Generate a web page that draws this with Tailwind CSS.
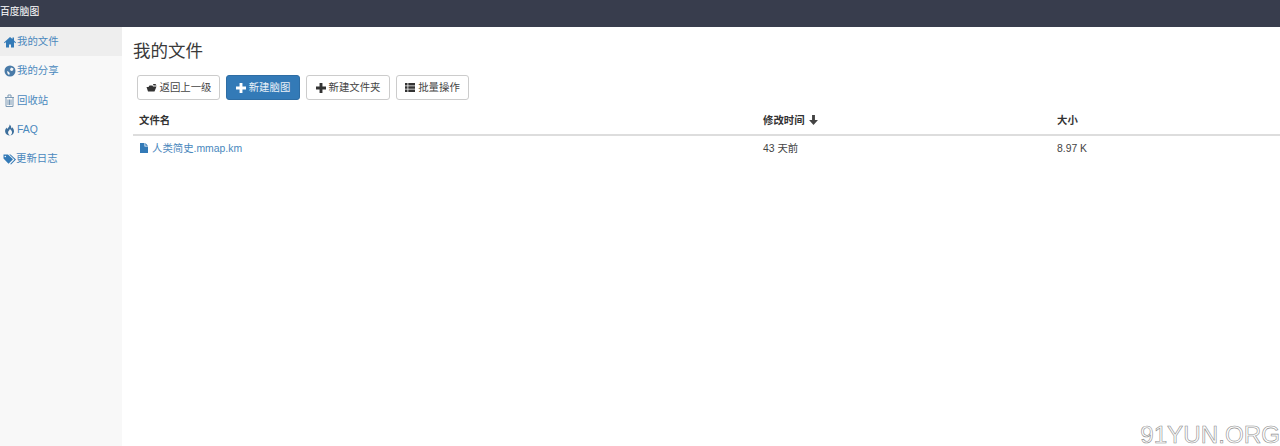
<!DOCTYPE html>
<html lang="zh">
<head>
<meta charset="utf-8">
<script src="https://cdn.jsdelivr.net/npm/@tailwindcss/browser@4"></script>
</head>
<body class="relative h-[446px] w-[1280px] overflow-hidden bg-white font-['Liberation_Sans','Noto_Sans_CJK_SC',sans-serif] text-[10.4px] text-[#444]">
<header class="flex h-[27px] items-center bg-[#383d4d] text-white"><span class="pb-[2px] text-[9.800px]">百度脑图</span></header>
<div class="flex h-[419px]">
  <nav class="w-[122px] shrink-0 bg-[#f8f8f8] text-[#4a88bd]">
    <a class="flex h-[29px] items-center gap-[1px] bg-[#eeeeee] pl-[4px]"><svg class="h-[12px] w-[12px]" viewBox="0 0 12 12" fill="#337ab7"><path d="M6 1 0 6.400l.7.8L2 6.100V11.500h3V8.500h2v3h3V6.100l1.300 1.100.7-.8-2-1.800V1.500H8.500v1.400z"/></svg><span>我的文件</span></a>
    <a class="flex h-[29px] items-center gap-[1px] pl-[4px]"><svg class="h-[12px] w-[12px]" viewBox="0 0 12 12" fill="#4a7ba8"><path fill-rule="evenodd" d="M6 .5a5.500 5.500 0 1 0 0 11 5.500 5.500 0 0 0 0-11zM7 2.500l2.500 1-.5 2-2 .5-1-1.500zM3 6l2 1 .8 1.800L5 10 3.500 8.500z"/></svg><span>我的分享</span></a>
    <a class="flex h-[30px] items-center gap-[2px] pt-[1px] pl-[4px]"><svg class="h-[13px] w-[11px]" viewBox="0 0 11 13" fill="none" stroke="#7d9ab5"><path d="M1 3.500h9M4 3.500V1h3v2.500M2 3.500v9h7v-9M4 5.500V11M5.500 5.500V11M7 5.500V11"/></svg><span>回收站</span></a>
    <a class="flex h-[29px] items-center gap-[1px] pl-[4px]"><svg class="h-[12px] w-[12px]" viewBox="0 0 12 12" fill="#3d6f9c"><path d="M5.500.5C6 2.500 4 3.500 3.200 5 2.800 4.500 2.700 4 2.800 3.500 1.500 4.800.8 6.200 1.200 8c.4 2 2.300 3.500 4.800 3.500-1.500-1-2.300-2.300-1.800-3.700.4-1 1.400-1.500 1.700-2.800 1 .8 2.800 2.500 2 4.500-.3.800-.8 1.500-1.500 2 1.800-.2 3.500-1.800 3.600-4C10.100 5 8.800 4.200 8.300 3.200 8 4 7.700 4.300 7.200 4.500 7.500 3 6.800 1.300 5.500.5z"/></svg><span>FAQ</span></a>
    <a class="flex h-[29px] items-center pl-[3px]"><svg class="h-[12px] w-[13px]" viewBox="0 0 13 11" fill="#337ab7"><path fill-rule="evenodd" d="M.5 1v4l5 5.300 4.500-4.500L5 1zM2.300 2.200a.8.800 0 1 1 0 1.600.8.800 0 0 1 0-1.600z"/><path d="M6.200 1l5.300 5-4.300 4.500.8.500 5-5L7.500 1z"/></svg><span>更新日志</span></a>
  </nav>
  <main class="min-w-0 flex-1 pl-[11px]">
    <h1 class="mt-[13px] text-[17.500px] leading-[23px] font-normal text-[#3a3a3a]">我的文件</h1>
    <div class="mt-[12px] ml-[4px] flex h-[25px] gap-[6px]">
      <button class="flex w-[83px] items-center justify-center gap-[3px] rounded-[3px] border border-[#ccc] bg-white"><svg class="h-[9px] w-[11px]" viewBox="0 0 11 8" fill="#333"><path d="M.5 3.500h2l1-1.500h3l.5 1h3.500L8.500 8H2z"/><path d="M7 .5h2.500l1 1.500H7.500z"/></svg><span>返回上一级</span></button>
      <button class="flex w-[74px] items-center justify-center gap-[3px] rounded-[3px] border border-[#2e6da4] bg-[#337ab7] text-white/90"><svg class="h-[10px] w-[10px]" viewBox="0 0 9 9" fill="#fff"><path d="M3.200 0h2.600v3.200H9v2.600H5.800V9H3.200V5.800H0V3.200h3.200z"/></svg><span>新建脑图</span></button>
      <button class="flex w-[84px] items-center justify-center gap-[3px] rounded-[3px] border border-[#ccc] bg-white"><svg class="h-[10px] w-[10px]" viewBox="0 0 9 9" fill="#333"><path d="M3.200 0h2.600v3.200H9v2.600H5.800V9H3.200V5.800H0V3.200h3.200z"/></svg><span>新建文件夹</span></button>
      <button class="flex w-[73px] items-center justify-center gap-[3px] rounded-[3px] border border-[#ccc] bg-white"><svg class="h-[9px] w-[10px]" viewBox="0 0 10 9" fill="#333"><path d="M0 0h2.500v2.500H0zM3.300 0H10v2.500H3.300zM0 3.250h2.500v2.500H0zM3.300 3.250H10v2.500H3.300zM0 6.500h2.500V9H0zM3.300 6.500H10V9H3.300z"/></svg><span>批量操作</span></button>
    </div>
    <div class="mt-[9px] grid h-[27px] grid-cols-[630px_294px_1fr] items-center border-b-2 border-[#ddd] pb-[2px] font-bold text-[#333]">
      <span class="pl-[6px]">文件名</span>
      <span class="flex items-center gap-[4px]">修改时间<svg class="h-[10px] w-[9px]" viewBox="0 0 8 9" fill="#444"><path d="M2.700 0h2.600v4.500H8L4 9 0 4.500h2.700z"/></svg></span>
      <span>大小</span>
    </div>
    <div class="grid h-[25px] grid-cols-[630px_294px_1fr] items-center">
      <a class="flex items-center gap-[4px] pl-[7px] text-[#4a88bd]"><svg class="h-[10px] w-[8px]" viewBox="0 0 8 10" fill="#337ab7"><path d="M0 0h4.500v3.500H8V10H0zM5.300 0 8 2.700H5.300z"/></svg><span>人类简史.mmap.km</span></a>
      <span>43 天前</span>
      <span>8.97 K</span>
    </div>
  </main>
</div>
<div class="absolute right-[0px] bottom-[-7px] font-['Liberation_Sans',sans-serif] text-[24.200px] leading-[36px] text-white [-webkit-text-stroke:0.6px_#8f8f8f]">91YUN.ORG</div>
</body>
</html>
